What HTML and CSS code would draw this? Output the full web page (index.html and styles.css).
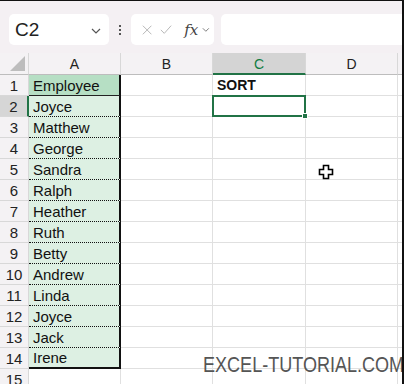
FILE: index.html
```html
<!DOCTYPE html>
<html lang="en">
<head>
    <meta charset="UTF-8">
    <title>Sort - Excel</title>
    <link rel="stylesheet" href="styles.css">
</head>
<body>
    <div class="window">
        <div class="toolbar">
            <div class="name-box">
                <span class="cell-ref">C2</span>
                <svg class="chevron" width="10" height="6" viewBox="0 0 10 6"><path d="M1 1l4 4 4-4" fill="none" stroke="#555" stroke-width="1.2"/></svg>
            </div>
            <div class="grip"><span></span><span></span><span></span></div>
            <div class="fx-buttons">
                <svg width="12" height="12" viewBox="0 0 12 12"><path d="M1 1l10 10M11 1L1 11" stroke="#b4b4b4" stroke-width="1.1"/></svg>
                <svg width="14" height="11" viewBox="0 0 14 11"><path d="M1 6l4 4 8-9" fill="none" stroke="#b4b4b4" stroke-width="1.1"/></svg>
                <span class="fx">fx</span>
                <svg width="9" height="6" viewBox="0 0 9 6"><path d="M1 1l3.5 3.5L8 1" fill="none" stroke="#777" stroke-width="1.1"/></svg>
            </div>
            <div class="formula-input"></div>
        </div>

        <div class="sheet">
            <div class="corner"><span class="corner-tri"></span></div>
            <div class="col-head">A</div>
            <div class="col-head">B</div>
            <div class="col-head active">C</div>
            <div class="col-head">D</div>
            <div class="col-head"></div>

            <div class="row-head">1</div>
            <div class="cell emp title">Employee</div>
            <div class="cell"></div>
            <div class="cell bold">SORT</div>
            <div class="cell"></div>
            <div class="cell"></div>

            <div class="row-head active">2</div>
            <div class="cell emp">Joyce</div>
            <div class="cell"></div>
            <div class="cell selected"><span class="handle"></span></div>
            <div class="cell"></div>
            <div class="cell"></div>

            <div class="row-head">3</div>
            <div class="cell emp">Matthew</div>
            <div class="cell"></div><div class="cell"></div><div class="cell"></div><div class="cell"></div>

            <div class="row-head">4</div>
            <div class="cell emp">George</div>
            <div class="cell"></div><div class="cell"></div><div class="cell"></div><div class="cell"></div>

            <div class="row-head">5</div>
            <div class="cell emp">Sandra</div>
            <div class="cell"></div><div class="cell"></div><div class="cell"></div><div class="cell"></div>

            <div class="row-head">6</div>
            <div class="cell emp">Ralph</div>
            <div class="cell"></div><div class="cell"></div><div class="cell"></div><div class="cell"></div>

            <div class="row-head">7</div>
            <div class="cell emp">Heather</div>
            <div class="cell"></div><div class="cell"></div><div class="cell"></div><div class="cell"></div>

            <div class="row-head">8</div>
            <div class="cell emp">Ruth</div>
            <div class="cell"></div><div class="cell"></div><div class="cell"></div><div class="cell"></div>

            <div class="row-head">9</div>
            <div class="cell emp">Betty</div>
            <div class="cell"></div><div class="cell"></div><div class="cell"></div><div class="cell"></div>

            <div class="row-head">10</div>
            <div class="cell emp">Andrew</div>
            <div class="cell"></div><div class="cell"></div><div class="cell"></div><div class="cell"></div>

            <div class="row-head">11</div>
            <div class="cell emp">Linda</div>
            <div class="cell"></div><div class="cell"></div><div class="cell"></div><div class="cell"></div>

            <div class="row-head">12</div>
            <div class="cell emp">Joyce</div>
            <div class="cell"></div><div class="cell"></div><div class="cell"></div><div class="cell"></div>

            <div class="row-head">13</div>
            <div class="cell emp">Jack</div>
            <div class="cell"></div><div class="cell"></div><div class="cell"></div><div class="cell"></div>

            <div class="row-head">14</div>
            <div class="cell emp last">Irene</div>
            <div class="cell"></div><div class="cell"></div><div class="cell"></div><div class="cell"></div>

            <div class="row-head">15</div>
            <div class="cell"></div>
            <div class="cell"></div><div class="cell"></div><div class="cell"></div><div class="cell"></div>
        </div>

        <svg class="cursor" width="16" height="16" viewBox="0 0 16 16">
            <path d="M5.5 1.5h5v4h4v5h-4v4h-5v-4h-4v-5h4z" fill="#fff" stroke="#000" stroke-width="1.6" stroke-linejoin="miter"/>
        </svg>

        <div class="watermark">EXCEL-TUTORIAL.COM</div>
    </div>
</body>
</html>
```

FILE: styles.css
```css
* {
    margin: 0;
    padding: 0;
    box-sizing: border-box;
}

body {
    width: 404px;
    height: 384px;
    overflow: hidden;
    background: #fff;
    font-family: "Liberation Sans", Arial, sans-serif;
}

.window {
    position: relative;
    width: 404px;
    height: 384px;
    overflow: hidden;
    border-top: 1px solid #111;
    border-right: 2px solid #111;
}

/* formula bar */
.toolbar {
    height: 52px;
    background: #f4f0f3;
    display: flex;
    align-items: flex-start;
    padding: 13px 0 0 9px;
}

.name-box {
    width: 100px;
    height: 31px;
    background: #fff;
    border-radius: 5px;
    display: flex;
    align-items: center;
    justify-content: space-between;
    padding: 0 8px 0 6px;
}

.cell-ref {
    font-size: 19px;
    color: #222;
}

.chevron {
    margin-top: 3px;
}

.grip {
    width: 22px;
    height: 31px;
    display: flex;
    flex-direction: column;
    align-items: center;
    justify-content: center;
    gap: 2px;
}

.grip span {
    width: 2px;
    height: 2px;
    background: #555;
}

.fx-buttons {
    width: 83px;
    height: 31px;
    background: #fff;
    border-radius: 5px;
    display: flex;
    align-items: center;
    padding: 0 4px 0 11px;
    gap: 8px;
}

.fx {
    font-family: "DejaVu Serif", "Liberation Serif", serif;
    font-style: italic;
    font-size: 15px;
    color: #444;
    margin-left: 4px;
    margin-right: -4px;
}

.formula-input {
    flex: 1;
    height: 31px;
    margin-left: 7px;
    background: #fff;
    border-radius: 5px 0 0 5px;
}

/* grid */
.sheet {
    display: grid;
    grid-template-columns: 29px 92px 92px 93px 92px 1fr;
    grid-template-rows: 22px repeat(15, 21px);
}

.corner,
.col-head,
.row-head {
    background: #f4f2f4;
    color: #222;
    font-size: 14px;
    display: flex;
    align-items: center;
    justify-content: center;
}

.corner {
    position: relative;
    border-right: 1px solid #d8d8d8;
    border-bottom: 1px solid #bdbdbd;
}

.corner-tri {
    position: absolute;
    right: 3px;
    bottom: 3px;
    width: 0;
    height: 0;
    border-left: 15px solid transparent;
    border-bottom: 15px solid #bdbdbd;
}

.col-head {
    border-right: 1px solid #d8d8d8;
    border-bottom: 1px solid #bdbdbd;
    padding-top: 1px;
}

.col-head.active {
    background: #d4d4d4;
    color: #107c41;
    border-bottom: 2px solid #217346;
}

.row-head {
    font-size: 15px;
    border-right: 1px solid #d8d8d8;
    border-bottom: 1px solid #d8d8d8;
}

.row-head.active {
    background: #d6d6d6;
    border-right: 2px solid #217346;
}

.cell {
    position: relative;
    border-right: 1px solid #e0e0e0;
    border-bottom: 1px solid #e0e0e0;
    font-size: 15px;
    color: #111;
    display: flex;
    align-items: center;
    padding-left: 4px;
}

.cell.emp {
    background: #ddf0e3;
    border-right: 2px solid #111;
    border-bottom: 1px dotted #111;
}

.cell.title {
    background: #b6dfc4;
    border-bottom: 1px solid #222;
}

.cell.last {
    border-bottom: 2px solid #111;
}

.cell.bold {
    font-weight: bold;
    font-size: 14px;
}

.cell.selected::after {
    content: "";
    position: absolute;
    top: -1px;
    left: -1px;
    right: -1px;
    bottom: -1px;
    border: 2px solid #217346;
}

.handle {
    position: absolute;
    right: -3px;
    bottom: -3px;
    width: 6px;
    height: 6px;
    background: #217346;
    border: 1px solid #fff;
    z-index: 2;
}

.cursor {
    position: absolute;
    left: 318px;
    top: 163px;
}

.watermark {
    position: absolute;
    left: 203px;
    top: 351px;
    font-size: 22px;
    color: #555;
    white-space: nowrap;
    transform: scaleX(0.82);
    transform-origin: left top;
}
```
